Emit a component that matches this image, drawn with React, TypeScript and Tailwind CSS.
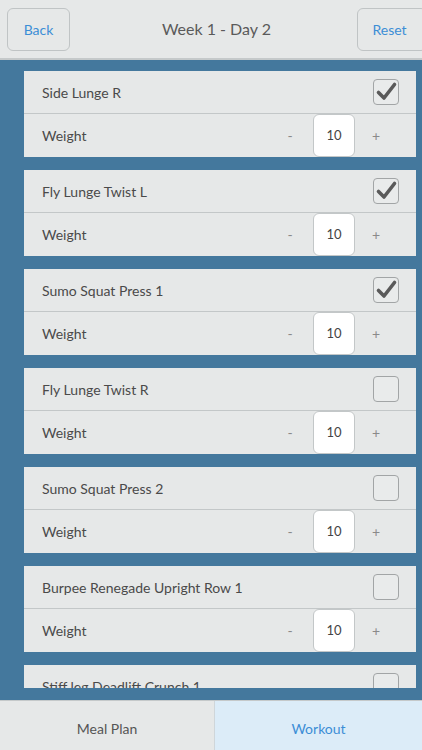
import React from "react";

const exercises = [
  { name: "Side Lunge R", done: true },
  { name: "Fly Lunge Twist L", done: true },
  { name: "Sumo Squat Press 1", done: true },
  { name: "Fly Lunge Twist R", done: false },
  { name: "Sumo Squat Press 2", done: false },
  { name: "Burpee Renegade Upright Row 1", done: false },
  { name: "Stiff leg Deadlift Crunch 1", done: false },
];

function CheckBox({ checked }: { checked: boolean }) {
  return (
    <div className="h-[26px] w-[26px] rounded-[4px] border border-[#a2a5a6] bg-[#e9ebeb] flex items-center justify-center">
      {checked && (
        <svg width="24" height="24" viewBox="0 0 24 24" fill="none">
          <path d="M4.5 12.5 L10 18 L20.5 4.5" stroke="#5a5a5a" strokeWidth="3.6" strokeLinecap="round" strokeLinejoin="round" />
        </svg>
      )}
    </div>
  );
}

function ExerciseCard({ name, done }: { name: string; done: boolean }) {
  return (
    <div className="shrink-0 bg-[#e6e8e8] text-[14px] text-[#4a4a4a]">
      {/* Title row */}
      <div className="h-[43px] flex items-center justify-between pl-[18px] pr-[17px] border-b border-[#c3c7c8]">
        <span>{name}</span>
        <CheckBox checked={done} />
      </div>
      {/* Weight row */}
      <div className="h-[43px] flex items-center pl-[18px]">
        <span className="flex-1">Weight</span>
        <span className="w-[20px] text-center text-[#8a8a8a] mr-[13px]">-</span>
        <div className="h-[43px] w-[42px] rounded-[6px] border border-[#c3c7c8] bg-white flex items-center justify-center text-[13px] text-[#444]">
          10
        </div>
        <span className="w-[42px] text-center text-[#8a8a8a] mr-[19px]">+</span>
      </div>
    </div>
  );
}

export default function App() {
  return (
    <div className="h-[750px] w-[422px] flex flex-col bg-[#44789d] overflow-hidden" style={{ fontFamily: "Lato, 'Noto Sans', sans-serif" }}>
      {/* Top bar */}
      <header className="h-[60px] shrink-0 bg-[#e6e8e8] border-b-2 border-[#c5c9ca] flex items-center justify-between pl-[7px]">
        <button className="h-[43px] w-[63px] rounded-[6px] border border-[#c0c4c5] text-[14px] text-[#3c8ed6]">Back</button>
        <span className="text-[16px] text-[#5a5a5a] ml-[6px]">Week 1 - Day 2</span>
        <button className="h-[43px] w-[70px] -mr-[5px] rounded-[6px] border border-[#c0c4c5] text-[14px] text-[#3c8ed6] pr-[5px]">Reset</button>
      </header>

      {/* Exercise list */}
      <main className="flex-1 min-h-0 pt-[11px] pb-[12px] pl-[24px] pr-[6px] flex">
        <div className="flex-1 overflow-hidden flex flex-col gap-[13px]">
          {exercises.map((e) => (
            <ExerciseCard key={e.name} name={e.name} done={e.done} />
          ))}
        </div>
      </main>

      {/* Bottom tabs */}
      <nav className="h-[50px] shrink-0 flex border-t border-[#c5c9ca] text-[14px]">
        <div className="w-[215px] bg-[#e6e8e8] flex items-center justify-center pt-[5px] text-[#555] border-r border-[#cfd6da]">Meal Plan</div>
        <div className="flex-1 bg-[#dcecf8] flex items-center justify-center pt-[5px] text-[#3c8ed6]">Workout</div>
      </nav>
    </div>
  );
}
